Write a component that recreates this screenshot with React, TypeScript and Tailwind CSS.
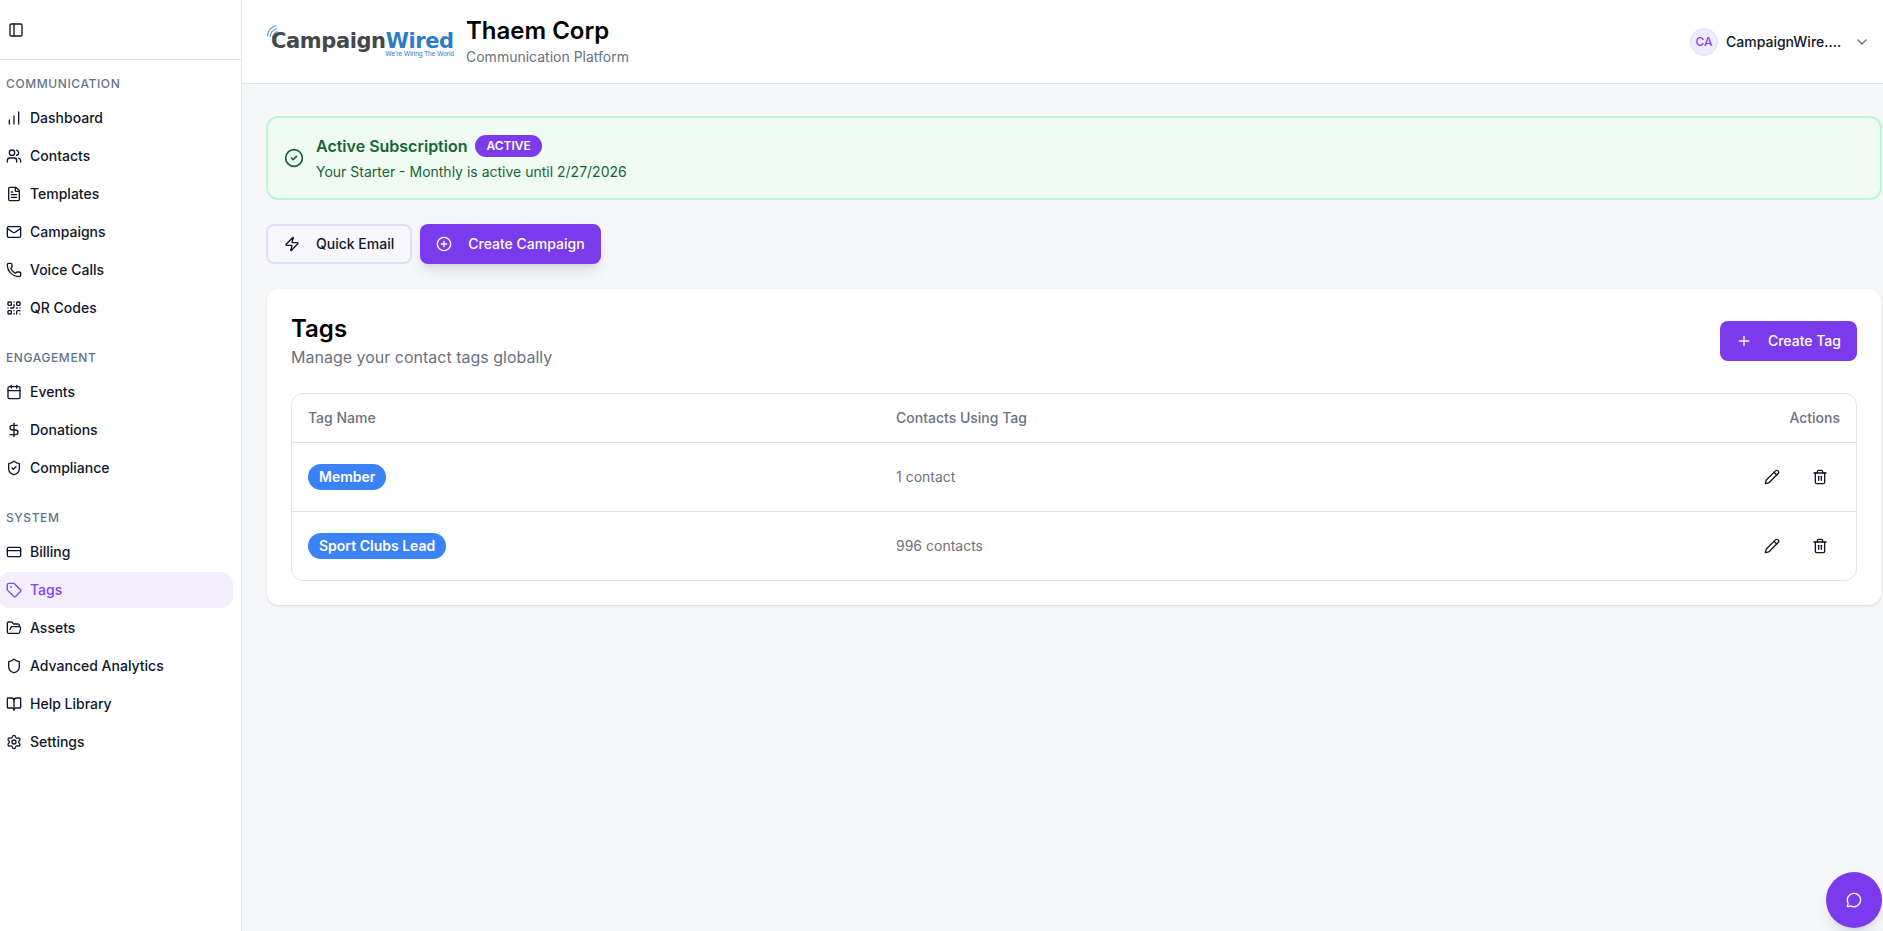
import {
  BookOpen,
  Calendar,
  ChartNoAxesColumnIncreasing,
  ChevronDown,
  CircleCheck,
  CirclePlus,
  CreditCard,
  DollarSign,
  FileText,
  FolderOpen,
  Mail,
  MessageCircle,
  PanelLeft,
  Pencil,
  Phone,
  Plus,
  QrCode,
  Settings,
  Shield,
  ShieldCheck,
  Tag,
  Trash2,
  Users,
  Zap,
} from "lucide-react";

const navGroups = [
  {
    label: "COMMUNICATION",
    items: [
      { name: "Dashboard", icon: ChartNoAxesColumnIncreasing },
      { name: "Contacts", icon: Users },
      { name: "Templates", icon: FileText },
      { name: "Campaigns", icon: Mail },
      { name: "Voice Calls", icon: Phone },
      { name: "QR Codes", icon: QrCode },
    ],
  },
  {
    label: "ENGAGEMENT",
    items: [
      { name: "Events", icon: Calendar },
      { name: "Donations", icon: DollarSign },
      { name: "Compliance", icon: ShieldCheck },
    ],
  },
  {
    label: "SYSTEM",
    items: [
      { name: "Billing", icon: CreditCard },
      { name: "Tags", icon: Tag },
      { name: "Assets", icon: FolderOpen },
      { name: "Advanced Analytics", icon: Shield },
      { name: "Help Library", icon: BookOpen },
      { name: "Settings", icon: Settings },
    ],
  },
];

const tags = [
  { name: "Member", contacts: "1 contact" },
  { name: "Sport Clubs Lead", contacts: "996 contacts" },
];

function Logo() {
  return (
    <div className="relative h-[36px] w-[188px] shrink-0">
      <svg
        className="absolute left-0 top-0"
        width="16"
        height="16"
        viewBox="0 0 16 16"
        fill="none"
        stroke="#5b9bd5"
        strokeWidth="1.1"
      >
        <path d="M1.5 12C1.8 7 5 3 10.5 1.5" />
        <path d="M4 13C4.2 9.5 6.5 6 11 4.5" />
        <path d="M6.5 13.5C6.8 11 8.5 8.8 11.5 7.5" />
      </svg>
      <div className="absolute left-[5px] top-[2px] whitespace-nowrap font-['DejaVu_Sans',sans-serif] text-[21px] font-bold leading-[30px] tracking-[-0.4px] text-[#44474c]">
        Campaign<span className="text-[#2f7cc6]">Wired</span>
      </div>
      <div className="absolute right-0 top-[26px] whitespace-nowrap font-['Liberation_Sans',sans-serif] text-[6.5px] leading-[8px] text-[#2b78c2]">
        We're Wiring The World
      </div>
    </div>
  );
}

export default function App() {
  return (
    <div className="flex h-screen overflow-hidden bg-[#f6f7f9] font-['Inter',sans-serif] text-[#0f172a]">
      <aside className="flex w-[242px] shrink-0 flex-col overflow-hidden border-r border-[#e2e4e9] bg-white">
        <div className="flex h-[60px] shrink-0 items-center border-b border-[#e2e4e9] pl-2">
          <PanelLeft className="h-4 w-4" />
        </div>
        <nav className="flex flex-col pt-2">
          {navGroups.map((group) => (
            <div key={group.label} className="pb-4">
              <div className="flex h-8 items-center pl-1.5 text-xs font-medium tracking-wider text-[#64748b]">
                {group.label}
              </div>
              <ul className="flex flex-col gap-0.5">
                {group.items.map((item) => {
                  const active = item.name === "Tags";
                  const Icon = item.icon;
                  return (
                    <li key={item.name}>
                      <a
                        className={`-ml-0.5 flex h-9 w-[235px] items-center gap-2 rounded-xl pl-2 text-sm font-medium ${
                          active ? "bg-[#f3effe] text-[#8345f2]" : ""
                        }`}
                      >
                        <Icon className="h-4 w-4 shrink-0" />
                        {item.name}
                      </a>
                    </li>
                  );
                })}
              </ul>
            </div>
          ))}
        </nav>
      </aside>

      <div className="flex min-w-0 flex-1 flex-col">
        <header className="flex h-[84px] shrink-0 items-center justify-between border-b border-[#e2e4e9] bg-white pl-6 pr-[13px]">
          <div className="flex items-center gap-3">
            <Logo />
            <div className="-mt-0.5">
              <h1 className="text-2xl font-semibold leading-8 text-black">Thaem Corp</h1>
              <p className="text-sm leading-5 text-[#6b7280]">Communication Platform</p>
            </div>
          </div>
          <div className="flex items-center">
            <div className="flex h-7 w-7 items-center justify-center rounded-full border border-[#e5e0f0] bg-[#f1e9fe] text-xs font-medium text-[#8345f2]">
              CA
            </div>
            <span className="ml-2 w-[114px] text-sm font-medium">CampaignWire....</span>
            <ChevronDown className="ml-[14px] h-4 w-4 text-[#6b7280]" />
          </div>
        </header>

        <main className="flex flex-1 flex-col pl-6 pr-px pt-8">
          <div className="flex h-[84px] items-center gap-3 rounded-xl border-2 border-[#bbf7d0] bg-[#eefcf3] px-4">
            <CircleCheck className="h-5 w-5 shrink-0 text-[#166534]" />
            <div>
              <div className="flex items-center gap-2">
                <span className="font-semibold leading-6 text-[#166534]">Active Subscription</span>
                <span className="flex h-[22px] items-center rounded-full bg-[#7c3aed] px-[11px] text-xs font-semibold text-white">
                  ACTIVE
                </span>
              </div>
              <p className="mt-1 text-sm leading-5 text-[#166534]">
                Your Starter - Monthly is active until 2/27/2026
              </p>
            </div>
          </div>

          <div className="mt-6 flex gap-2">
            <button
              type="button"
              className="flex h-10 items-center gap-4 rounded-lg border-2 border-[#e4dcf9] bg-[#f7f7fc] pl-4 pr-4 text-sm font-medium"
            >
              <Zap className="h-4 w-4" />
              Quick Email
            </button>
            <button
              type="button"
              className="flex h-10 items-center gap-4 rounded-lg bg-[#7c3aed] px-4 text-sm font-medium text-white shadow-lg"
            >
              <CirclePlus className="h-4 w-4" />
              Create Campaign
            </button>
          </div>

          <section className="mx-px mt-[25px] rounded-xl bg-white p-6 shadow-sm">
            <div className="flex items-start justify-between">
              <div>
                <h2 className="text-2xl font-semibold leading-8 text-black">Tags</h2>
                <p className="text-base leading-6 text-[#6b7280]">Manage your contact tags globally</p>
              </div>
              <button
                type="button"
                className="mt-2 flex h-10 items-center gap-4 rounded-lg bg-[#7c3aed] px-4 text-sm font-medium text-white"
              >
                <Plus className="h-4 w-4" />
                Create Tag
              </button>
            </div>

            <div className="mt-6 overflow-hidden rounded-xl border border-[#e2e4e9]">
              <table className="w-full table-fixed border-collapse text-sm">
                <thead>
                  <tr className="h-[48px] border-b border-[#e2e4e9] text-left font-medium text-[#6b7280]">
                    <th className="w-[588px] pl-4 font-medium">Tag Name</th>
                    <th className="pl-4 font-medium">Contacts Using Tag</th>
                    <th className="w-[200px] pr-4 text-right font-medium">Actions</th>
                  </tr>
                </thead>
                <tbody>
                  {tags.map((t, i) => (
                    <tr
                      key={t.name}
                      className={`h-[69px] ${i < tags.length - 1 ? "border-b border-[#e2e4e9]" : ""}`}
                    >
                      <td className="pl-4">
                        <span className="inline-flex h-[26px] items-center rounded-full bg-[#3b82f6] px-[11px] font-semibold text-white">
                          {t.name}
                        </span>
                      </td>
                      <td className="pl-4 text-[#6b7280]">{t.contacts}</td>
                      <td className="pr-4">
                        <div className="flex justify-end gap-2">
                          <button type="button" className="flex h-10 w-10 items-center justify-center">
                            <Pencil className="h-4 w-4" />
                          </button>
                          <button type="button" className="flex h-10 w-10 items-center justify-center">
                            <Trash2 className="h-4 w-4" />
                          </button>
                        </div>
                      </td>
                    </tr>
                  ))}
                </tbody>
              </table>
            </div>
          </section>
        </main>
      </div>

      <button
        type="button"
        className="fixed bottom-[3px] right-px flex h-14 w-14 items-center justify-center rounded-full bg-[#7c3aed] text-white shadow-lg"
      >
        <MessageCircle className="h-4 w-4" />
      </button>
    </div>
  );
}
